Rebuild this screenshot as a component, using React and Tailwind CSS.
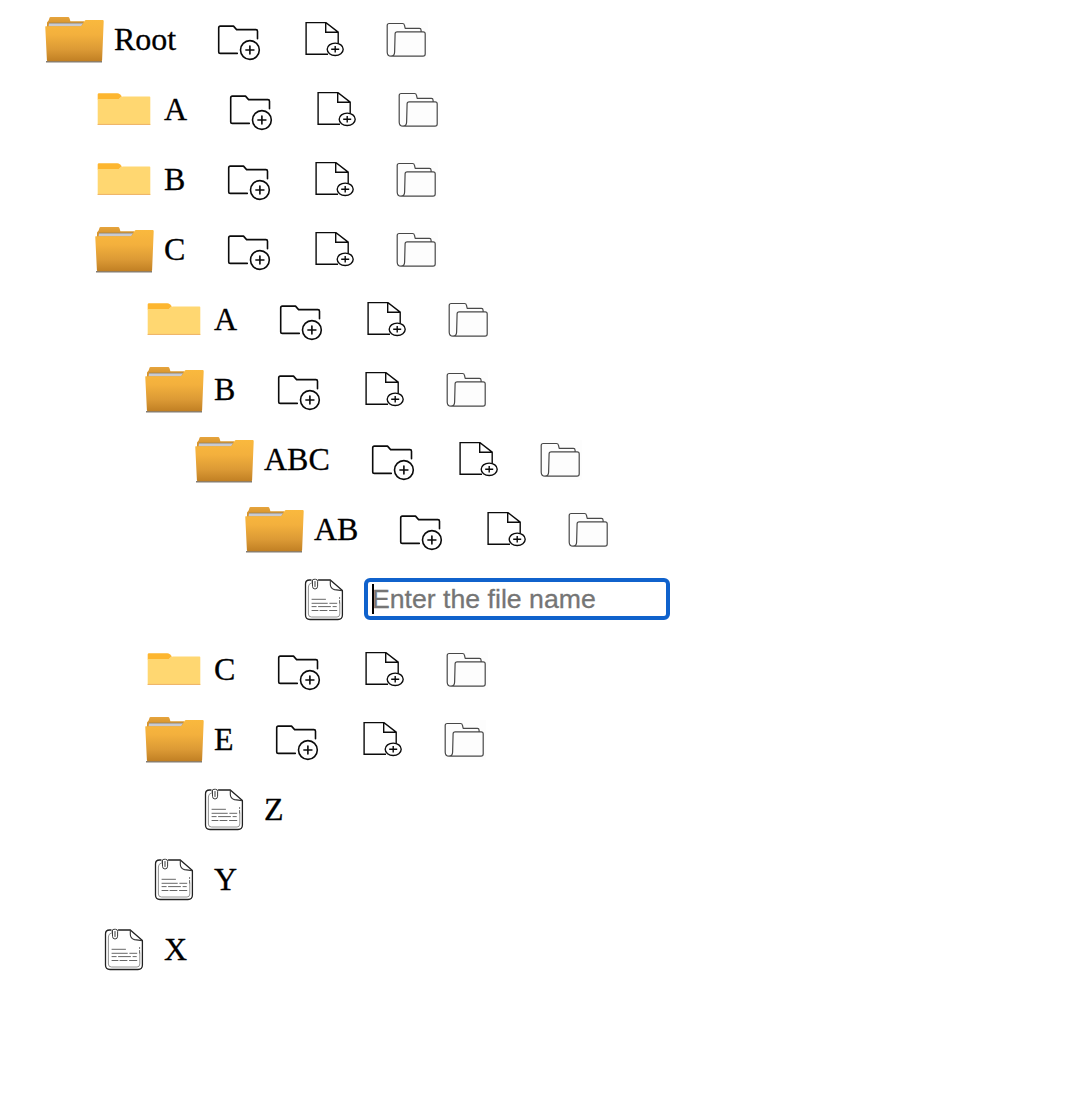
import React from "react";

const OpenFolder = () => (
  <svg className="h-[70px] w-[74px] shrink-0" viewBox="40 5 74 70" fill="none">
    <defs>
      <linearGradient id="front" x1="0" y1="20" x2="0" y2="62" gradientUnits="userSpaceOnUse">
        <stop offset="0" stopColor="#fab93e" />
        <stop offset="0.35" stopColor="#f3b03d" />
        <stop offset="0.7" stopColor="#dc9a35" />
        <stop offset="1" stopColor="#bf7e22" />
      </linearGradient>
      <linearGradient id="tab" x1="0" y1="17" x2="0" y2="27" gradientUnits="userSpaceOnUse">
        <stop offset="0" stopColor="#e6a43c" />
        <stop offset="1" stopColor="#cf8d28" />
      </linearGradient>
    </defs>
    <path d="M47 28V22.5L48.6 20.5L49.5 17.8Q49.8 17.1 50.5 17.1H68.2Q69.1 17.1 69.4 17.9L70.4 21.3H84V30H47Z" fill="url(#tab)" />
    <path d="M49 22.9H83.4L81 26.6H48.6Z" fill="#c8cad2" />
    <path d="M48.8 23.1H83" stroke="#8b7c5e" strokeWidth=".7" />
    <path d="M46 61.7H102" stroke="#575049" strokeWidth="1.4" opacity=".75" />
    <path d="M45.6 26.3H80.2Q81.6 26.3 82.4 24.8L84.2 21.4Q84.9 20.1 86.2 20.1H102.6Q103.8 20.1 103.7 21.3L102.1 60Q102 61.2 101 61.2H48Q47 61.2 46.9 60L45.3 27.5Q45.2 26.3 45.6 26.3Z" fill="url(#front)" />
  </svg>
);

const ClosedFolder = () => (
  <svg className="h-[70px] w-[74px] shrink-0" viewBox="40 5 74 70" fill="none">
    <path d="M47.7 24.6Q47.7 23.2 49 23.2H67.2Q68.8 23.2 69.8 24.2L71.8 26.3L69.8 28.5Q68.8 29.5 67.2 29.5H47.7Z" fill="#fdb62f" />
    <path d="M47.7 29.1H67Q68.8 29.1 69.8 28.2L71.2 26.9Q71.8 26.4 73 26.4H99.5Q100.3 26.4 100.3 27.2V54.9H47.7Z" fill="#ffd771" />
    <path d="M47.7 54.4H100.3" stroke="#eeb26a" strokeWidth="1" />
  </svg>
);

const FileIcon = () => (
  <svg className="h-[70px] w-[74px] shrink-0" viewBox="40 5 74 70" fill="none" strokeLinecap="round" strokeLinejoin="round">
    <path d="M61 20H59.5Q55.5 20 55.5 24V55Q55.5 59.5 60 59.5H88Q92.4 59.5 92.4 55V30.6L80.3 20H68.5" stroke="#222" strokeWidth="1.3" />
    <path d="M60.8 23.2Q58.4 24 58.4 27V54Q58.4 57 61.5 57H87Q89.8 57 89.8 54V43" stroke="#777" strokeWidth=".8" />
    <path d="M80.3 20.2V24.2Q80.3 28.4 84.5 29.6L92.2 30.6" stroke="#333" strokeWidth="1.1" />
    <path d="M62.2 23.5V21Q62.2 19.3 64 19.3H65.6Q67.6 19.3 67.6 21.3V26.2Q67.6 29 65 29Q62.5 29 62.5 26.3V21M65 21.5V26.5" stroke="#3b3b3b" strokeWidth="1" />
    <path d="M89.6 37.5V38.5M89.6 40.5V43" stroke="#555" strokeWidth=".9" />
    <path d="M62 39.3H75.5M62 43.3H77.3M79.8 43.3H86.8M62 46.6H66.2M68.5 46.6H80.5M83 46.6H86.3M62 50.5H68M70 50.5H77M79.5 50.5H86.8" stroke="#5f5f5f" strokeWidth=".95" />
  </svg>
);

const NewFolderIcon = () => (
  <svg className="ml-8 h-[70px] w-[82px] shrink-0" viewBox="208 5 82 70" fill="none" stroke="#0b0b0b" strokeWidth="1.6" strokeLinecap="round" strokeLinejoin="round">
    <path d="M237.3 53.4H220.4Q218.7 53.4 218.7 51.7V27.8Q218.7 26.1 220.4 26.1H233.5L236.6 29.6H255.9Q257.5 29.6 257.5 31.2V38.8" />
    <circle cx="249.9" cy="50" r="9.4" />
    <path d="M249.9 46V54M245.9 50H253.9" />
  </svg>
);

const NewFileIcon = () => (
  <svg className="h-[70px] w-[80px] shrink-0" viewBox="290 5 80 70" fill="none" stroke="#0b0b0b" strokeWidth="1.4">
    <path d="M328 54.2H306.1V22.6H326L338.2 32.2V43.2M325.7 22.6V32.2H338.2" />
    <ellipse cx="335.2" cy="49.3" rx="8" ry="6.2" />
    <path d="M335.2 46V52.6M331.2 49.3H339.2" />
  </svg>
);

const FoldersIcon = () => (
  <svg className="h-[70px] w-[70px] shrink-0" viewBox="370 5 70 70" fill="none" stroke="#484848" strokeWidth="1.2" strokeLinejoin="round">
    <rect x="386" y="20" width="42" height="40" fill="#fdfdfd" stroke="none" />
    <path d="M421.1 31.5V30.2Q421 28.4 419.4 28.4H405.2L404.5 25.3Q404.1 23.5 402.5 23.5H389.2Q387.2 23.5 387.2 25.5V52.2Q387.4 56.2 391 56.2H423Q425.2 56.2 425.2 54V33.8Q425.2 31.8 423.1 31.8H397.2Q395.1 31.8 395.1 33.8L394.6 52.3Q394.4 56.2 391 56.2" />
  </svg>
);

const indents = ["pl-10", "pl-[90px]", "pl-[140px]", "pl-[190px]", "pl-[240px]", "pl-[290px]"];

const labelWidths = {
  Root: "w-[62px]",
  A: "w-[24px]",
  B: "w-[22px]",
  C: "w-[22px]",
  E: "w-[20px]",
  AB: "w-[44px]",
  ABC: "w-[66px]",
};

const Row = ({ depth, children }) => (
  <div className={`flex h-[70px] items-center ${indents[depth]}`}>{children}</div>
);

const nodes = [
  ["Root", 0, "open"],
  ["A", 1, "closed"],
  ["B", 1, "closed"],
  ["C", 1, "open"],
  ["A", 2, "closed"],
  ["B", 2, "open"],
  ["ABC", 3, "open"],
  ["AB", 4, "open"],
  ["", 5, "input"],
  ["C", 2, "closed"],
  ["E", 2, "open"],
  ["Z", 3, "file"],
  ["Y", 2, "file"],
  ["X", 1, "file"],
];

export default function App() {
  return (
    <main className="min-h-[1108px] bg-white pt-[5px] font-['Liberation_Serif',serif] text-[32px] leading-[68px] text-black">
      {nodes.map(([name, depth, kind], i) => (
        <Row key={i} depth={depth}>
          {kind === "open" && <OpenFolder />}
          {kind === "closed" && <ClosedFolder />}
          {(kind === "file" || kind === "input") && <FileIcon />}
          {kind === "input" ? (
            <div className="relative mt-[-2px] h-[42px] w-[306px]">
              <input
                placeholder="Enter the file name"
                className="block h-full w-full rounded-[6px] border-4 border-[#1062cc] bg-white pl-[4px] font-['Liberation_Sans',sans-serif] text-[26.67px] leading-[30px] caret-transparent outline-none [-webkit-text-stroke:0.3px_#757575] placeholder:text-[#757575]"
              />
              <span className="absolute left-2 top-[6px] h-[30px] w-[2px] bg-black" />
            </div>
          ) : (
            <span className={`mb-[2px] shrink-0 whitespace-pre [-webkit-text-stroke:0.3px_black] ${labelWidths[name] || ""}`}>{name}</span>
          )}
          {(kind === "open" || kind === "closed") && (
            <>
              <NewFolderIcon />
              <NewFileIcon />
              <FoldersIcon />
            </>
          )}
        </Row>
      ))}
    </main>
  );
}
